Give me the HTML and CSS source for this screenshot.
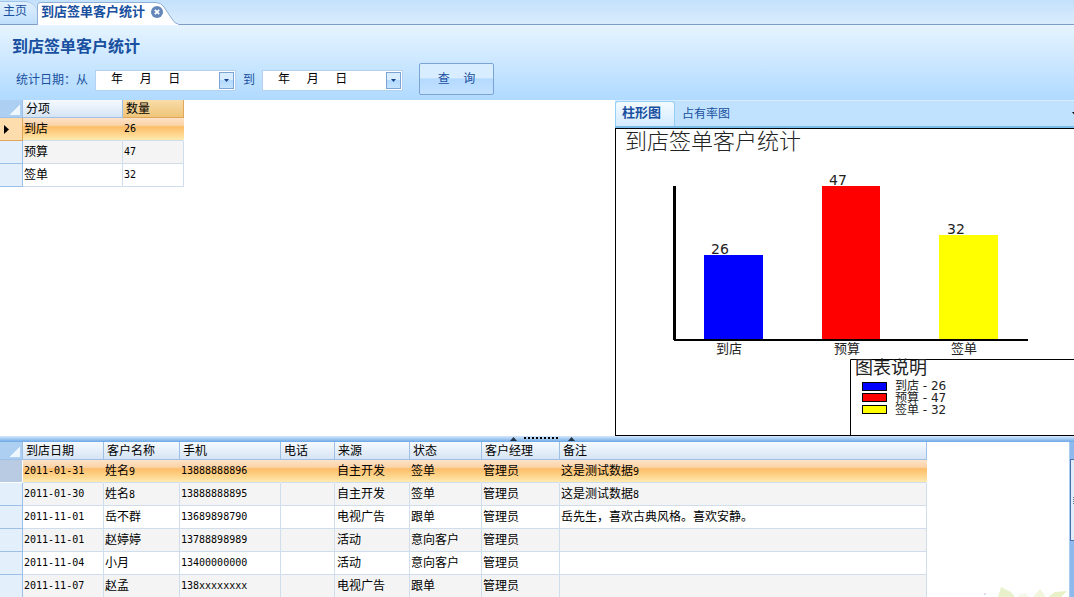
FILE: index.html
```html
<!DOCTYPE html>
<html lang="zh-CN">
<head>
<meta charset="utf-8">
<title>到店签单客户统计</title>
<link rel="stylesheet" href="styles.css">
</head>
<body>
<div class="app">
  <nav class="tabs">
    <a class="tab tab-home" href="#">主页</a>
    <div class="tab tab-active">
      <svg class="tab-shape" width="142" height="24" viewBox="0 0 142 24" aria-hidden="true">
        <path d="M.5 24V4Q.5 1.500 4 1.500H119Q124 1.500 127 6L135 18Q138 23 142 23.500V24Z" fill="#fff" stroke="#8eafd8"/>
        <path d="M1 23h140v1H1z" fill="#fff"/>
      </svg>
      <a class="tab-label" href="#">到店签单客户统计</a>
      <button class="tab-close" type="button" aria-label="关闭">
        <svg width="12" height="12" viewBox="0 0 12 12"><circle cx="6" cy="6" r="6" fill="#6486b8"/><path d="M3.800 3.800l4.400 4.400M8.200 3.800l-4.400 4.400" stroke="#fff" stroke-width="1.800"/></svg>
      </button>
    </div>
  </nav>

  <header class="query">
    <h1>到店签单客户统计</h1>
    <form class="filters">
      <label for="from">统计日期：从</label>
      <div class="date">
        <input id="from" type="text" value="年&nbsp;&nbsp;&nbsp;&nbsp;&nbsp;月&nbsp;&nbsp;&nbsp;&nbsp;&nbsp;日">
        <button type="button" aria-label="选择开始日期"><svg width="5" height="3" viewBox="0 0 5 3"><path d="M0 0h5L2.500 3z" fill="#15428b"/></svg></button>
      </div>
      <label for="to">到</label>
      <div class="date">
        <input id="to" type="text" value="年&nbsp;&nbsp;&nbsp;&nbsp;&nbsp;月&nbsp;&nbsp;&nbsp;&nbsp;&nbsp;日">
        <button type="button" aria-label="选择结束日期"><svg width="5" height="3" viewBox="0 0 5 3"><path d="M0 0h5L2.500 3z" fill="#15428b"/></svg></button>
      </div>
      <button class="search" type="button">查&nbsp;&nbsp;&nbsp;&nbsp;询</button>
    </form>
  </header>

  <main class="content">
    <section class="summary">
      <table class="grid summary-grid">
        <colgroup><col class="w-head"><col class="w-item"><col class="w-count"></colgroup>
        <thead><tr><th class="corner"></th><th>分项</th><th class="sorted">数量</th></tr></thead>
        <tbody>
          <tr class="selected"><th class="current"><svg width="5" height="9" viewBox="0 0 5 9"><path d="M0 0l5 4.500L0 9z"/></svg></th><td>到店</td><td class="num">26</td></tr>
          <tr><th></th><td>预算</td><td class="num">47</td></tr>
          <tr><th></th><td>签单</td><td class="num">32</td></tr>
        </tbody>
      </table>
    </section>

    <section class="chart-pane">
      <div class="chart-tabs">
        <button class="chart-tab chart-tab-active" type="button">柱形图</button>
        <button class="chart-tab" type="button">占有率图</button>
        <svg class="more" width="5" height="3" viewBox="0 0 5 3" aria-hidden="true"><path d="M0 0h5L2.500 3z"/></svg>
      </div>
      <div class="chart">
        <svg class="plot" viewBox="0 0 458 306" preserveAspectRatio="xMinYMin meet" role="img" aria-label="到店签单客户统计">
          <text class="chart-title" x="9" y="20">到店签单客户统计</text>
          <path d="M57 57h3v154h-3z"/>
          <path d="M58 210h354v2H58z"/>
          <rect x="88" y="126" width="59" height="84" fill="#00f"/>
          <rect x="206" y="57" width="58" height="153" fill="#f00"/>
          <rect x="323" y="106" width="59" height="104" fill="#ff0"/>
          <text class="value" x="95" y="125">26</text>
          <text class="value" x="213" y="56">47</text>
          <text class="value" x="331" y="105">32</text>
          <text class="axis" x="113" y="224">到店</text>
          <text class="axis" x="231" y="224">预算</text>
          <text class="axis" x="348" y="224">签单</text>
          <path d="M234.500 307V230.500H900" fill="none" stroke="#000"/>
          <text class="legend-title" x="239" y="245">图表说明</text>
          <g stroke="#000">
            <rect x="246.500" y="253.500" width="24" height="8" fill="#00f"/>
            <rect x="246.500" y="264.500" width="24" height="8" fill="#f00"/>
            <rect x="246.500" y="276.500" width="24" height="8" fill="#ff0"/>
          </g>
          <text class="legend" x="279" y="261">到店 - 26</text>
          <text class="legend" x="279" y="273">预算 - 47</text>
          <text class="legend" x="279" y="285">签单 - 32</text>
        </svg>
      </div>
    </section>
  </main>

  <div class="splitter">
    <svg width="66" height="5" viewBox="0 0 66 5" aria-hidden="true">
      <path d="M0 5l3.500-4L7 5zM58 5l3.500-4L65 5z" fill="#234"/>
      <path d="M14 2h36" stroke="#000" stroke-width="2" stroke-dasharray="2 2"/>
    </svg>
  </div>

  <section class="detail">
    <div class="detail-scroll">
      <table class="grid">
        <colgroup><col class="w-head"><col class="w-date"><col class="w-name"><col class="w-mobile"><col class="w-phone"><col class="w-source"><col class="w-status"><col class="w-manager"><col class="w-note"></colgroup>
        <thead><tr><th class="corner"></th><th>到店日期</th><th>客户名称</th><th>手机</th><th>电话</th><th>来源</th><th>状态</th><th>客户经理</th><th>备注</th></tr></thead>
        <tbody>
          <tr class="selected"><th class="pressed"></th><td class="num">2011-01-31</td><td>姓名<span class="num">9</span></td><td class="num">13888888896</td><td></td><td>自主开发</td><td>签单</td><td>管理员</td><td>这是测试数据<span class="num">9</span></td></tr>
          <tr><th></th><td class="num">2011-01-30</td><td>姓名<span class="num">8</span></td><td class="num">13888888895</td><td></td><td>自主开发</td><td>签单</td><td>管理员</td><td>这是测试数据<span class="num">8</span></td></tr>
          <tr><th></th><td class="num">2011-11-01</td><td>岳不群</td><td class="num">13689898790</td><td></td><td>电视广告</td><td>跟单</td><td>管理员</td><td>岳先生，喜欢古典风格。喜欢安静。</td></tr>
          <tr><th></th><td class="num">2011-11-01</td><td>赵婷婷</td><td class="num">13788898989</td><td></td><td>活动</td><td>意向客户</td><td>管理员</td><td></td></tr>
          <tr><th></th><td class="num">2011-11-04</td><td>小月</td><td class="num">13400000000</td><td></td><td>活动</td><td>意向客户</td><td>管理员</td><td></td></tr>
          <tr><th></th><td class="num">2011-11-07</td><td>赵孟</td><td class="num">138xxxxxxxx</td><td></td><td>电视广告</td><td>跟单</td><td>管理员</td><td></td></tr>
        </tbody>
      </table>
      <svg class="leaves" width="86" height="10" viewBox="0 0 86 10" aria-hidden="true">
        <path d="M18 0l10 5 4 5H15z" fill="#e9f1cc"/><path d="M57 2l6 8H50z" fill="#f1f5dc"/><path d="M65 10l7-5 12-1-6 6z" fill="#e8f0c8"/><path d="M36 8l6-2 4 4H34z" fill="#f5f8e8"/><path d="M1 6h2v2H1z" fill="#dde"/>
      </svg>
    </div>
    <div class="scrollbar">
      <div class="scroll-up"></div>
      <div class="thumb"><i></i><i></i><i></i><i></i></div>
    </div>
  </section>
</div>
</body>
</html>
```

FILE: styles.css
```css
* { box-sizing: border-box; }

body {
  margin: 0;
  font: 12px/16px "Liberation Sans", "Noto Sans CJK SC", sans-serif;
  color: #000;
  background: #fff;
}

button, input { font: inherit; margin: 0; padding: 0; border: 0; }
a { color: inherit; text-decoration: none; }
svg { display: block; }

.app {
  display: grid;
  grid-template-rows: auto auto 336fr 6px 155fr;
  height: 100vh;
  overflow: hidden;
}

/* Page tabs */
.tabs {
  display: flex;
  height: 25px;
  border-bottom: 1px solid #7f9cc6;
  background: linear-gradient(#c4e1fc, #d9ecfd);
  color: #1950a0;
}
.tab-home {
  width: 37px;
  height: 23px;
  margin-top: 1px;
  padding: 1px 3px;
  border-top: 1px solid #a3c3e8;
  border-radius: 0 12px 0 0;
  background: linear-gradient(#e0f0fe, #bfdefb);
}
.tab-active {
  position: relative;
  display: flex;
  align-items: center;
  gap: 6px;
  width: 142px;
  height: 25px;
  padding: 0 0 2px 4px;
}
.tab-shape { position: absolute; left: 0; bottom: 0; }
.tab-label { position: relative; font-size: 13px; font-weight: bold; white-space: nowrap; }
.tab-close { position: relative; background: none; }

/* Query header */
.query {
  height: 75px;
  padding: 13px 12px 0;
  background: linear-gradient(#e6f4ff, #b0daff);
  color: #1950a0;
}
.query h1 { margin: 0; font-size: 16px; line-height: 18px; }
.filters { display: flex; align-items: center; gap: 7px; height: 32px; margin-top: 8px; padding-left: 4px; }
.date {
  display: flex;
  align-items: center;
  width: 141px;
  height: 21px;
  padding-right: 1px;
  border: 1px solid #b5d1f0;
  background: #fff;
}
.date input { flex: 1; min-width: 0; height: 16px; margin-bottom: 2px; padding-left: 15px; background: none; }
.date button, .search {
  display: grid;
  place-items: center;
  border: 1px solid #7ba4d5;
  background: linear-gradient(#d8edff 0 45%, #b5daff 50%, #c3e2ff);
  color: #1950a0;
}
.date button { width: 15px; height: 17px; }
.search { width: 75px; height: 32px; margin: 0 0 2px 9px; border-radius: 2px; }

/* Upper area */
.content { display: grid; grid-template-columns: 615fr 459fr; min-height: 0; }

/* Data grids */
.grid { border-collapse: separate; border-spacing: 0; table-layout: fixed; width: 0; }
.w-head { width: 23px; }
.w-item { width: 100px; }
.w-count { width: 61px; }
.w-date { width: 81px; }
.w-name { width: 76px; }
.w-mobile { width: 101px; }
.w-phone { width: 54px; }
.w-source { width: 75px; }
.w-status { width: 72px; }
.w-manager { width: 78px; }
.w-note { width: 367px; }
.grid th, .grid td { text-align: left; font-weight: normal; white-space: nowrap; }
.grid thead th {
  height: 18px;
  padding: 0 3px;
  border-right: 1px solid #9ebfe6;
  border-bottom: 1px solid #9ebfe6;
  background: linear-gradient(#f6faff, #d5e4f4);
}
.grid thead .corner { background: linear-gradient(135deg, transparent 50%, #eef6ff 50%) 9px 5px / 11px 10px no-repeat, #add0f2; }
.grid thead .sorted { background: linear-gradient(#f9dca9, #eec579); border-color: #e0a75a; }
.grid tbody th {
  height: 23px;
  padding: 0 4px;
  border-right: 1px solid #9ebfe6;
  border-bottom: 1px solid #9ebfe6;
  background: #e3effb;
}
.grid td { height: 23px; padding: 0 1px; border-right: 1px solid #d0dded; border-bottom: 1px solid #d0dded; }
.grid tr:nth-child(even) td { background: #f4f4f4; }
.grid .selected td {
  border-right-color: transparent;
  background: linear-gradient(#fce2c8 0, #fbd3a6 32%, #fdbd69 38%, #fed78f 72%, #ffedb5) border-box;
}
.grid .current { background: #fddcae; border-color: #e0a75a; }
.grid .pressed { background: #b8cbe3; border-color: #fff; }
.num { font-family: "DejaVu Sans Mono", monospace; font-size: 10px; }
.detail td:nth-child(6) { padding-left: 2px; }

/* Chart */
.chart-pane { display: flex; flex-direction: column; min-width: 0; min-height: 0; }
.chart-tabs {
  display: flex;
  align-items: center;
  height: 28px;
  border-top: 1px solid #d5edff;
  border-bottom: 2px solid #79bce9;
  background: #c0e2ff;
  overflow: hidden;
}
.chart-tab { padding: 0 7px; background: none; color: #1950a0; white-space: nowrap; }
.chart-tab-active {
  width: 60px;
  height: 26px;
  padding: 0 6px 3px;
  border: 1px solid #94d0f5;
  border-bottom: 0;
  border-radius: 3px 3px 0 0;
  background: linear-gradient(#f3faff, #d3eaff);
  font-size: 13px;
  font-weight: bold;
  text-align: left;
}
.more { margin: 0 -3px 0 auto; }
.chart { flex: 1; min-height: 0; border: 1px solid #000; border-right: 0; overflow: hidden; }
.plot { width: 100%; height: 100%; overflow: visible; }
.plot text { font-family: "DejaVu Sans", "Noto Sans CJK SC", sans-serif; fill: #222; }
.plot .chart-title { font-family: "Noto Sans CJK SC", sans-serif; font-size: 22px; font-weight: 300; }
.plot .value { font-size: 14px; }
.plot .axis { font-size: 13px; text-anchor: middle; }
.plot .legend { font-size: 12px; }
.plot .legend-title { font-size: 18px; }

.splitter {
  display: flex;
  justify-content: center;
  padding-left: 12px;
  background: linear-gradient(#d7e9fc, #6ba7e6);
}

/* Detail list */
.detail { display: flex; min-height: 0; overflow: hidden; }
.detail-scroll { position: relative; flex: 1; min-width: 0; overflow: hidden; }
.leaves { position: absolute; right: 0; bottom: 0; }
.scrollbar { width: 5px; border-left: 1px solid #a8cdf4; background: #8db9ec; }
.scroll-up { height: 17px; }
.thumb {
  display: grid;
  align-content: center;
  justify-content: end;
  gap: 1px;
  height: 82px;
  border: 1px solid #4b6fa8;
  border-right: 0;
  background: #e2edfa;
}
.thumb i { width: 1px; height: 1px; background: #6b7f9c; }
```
